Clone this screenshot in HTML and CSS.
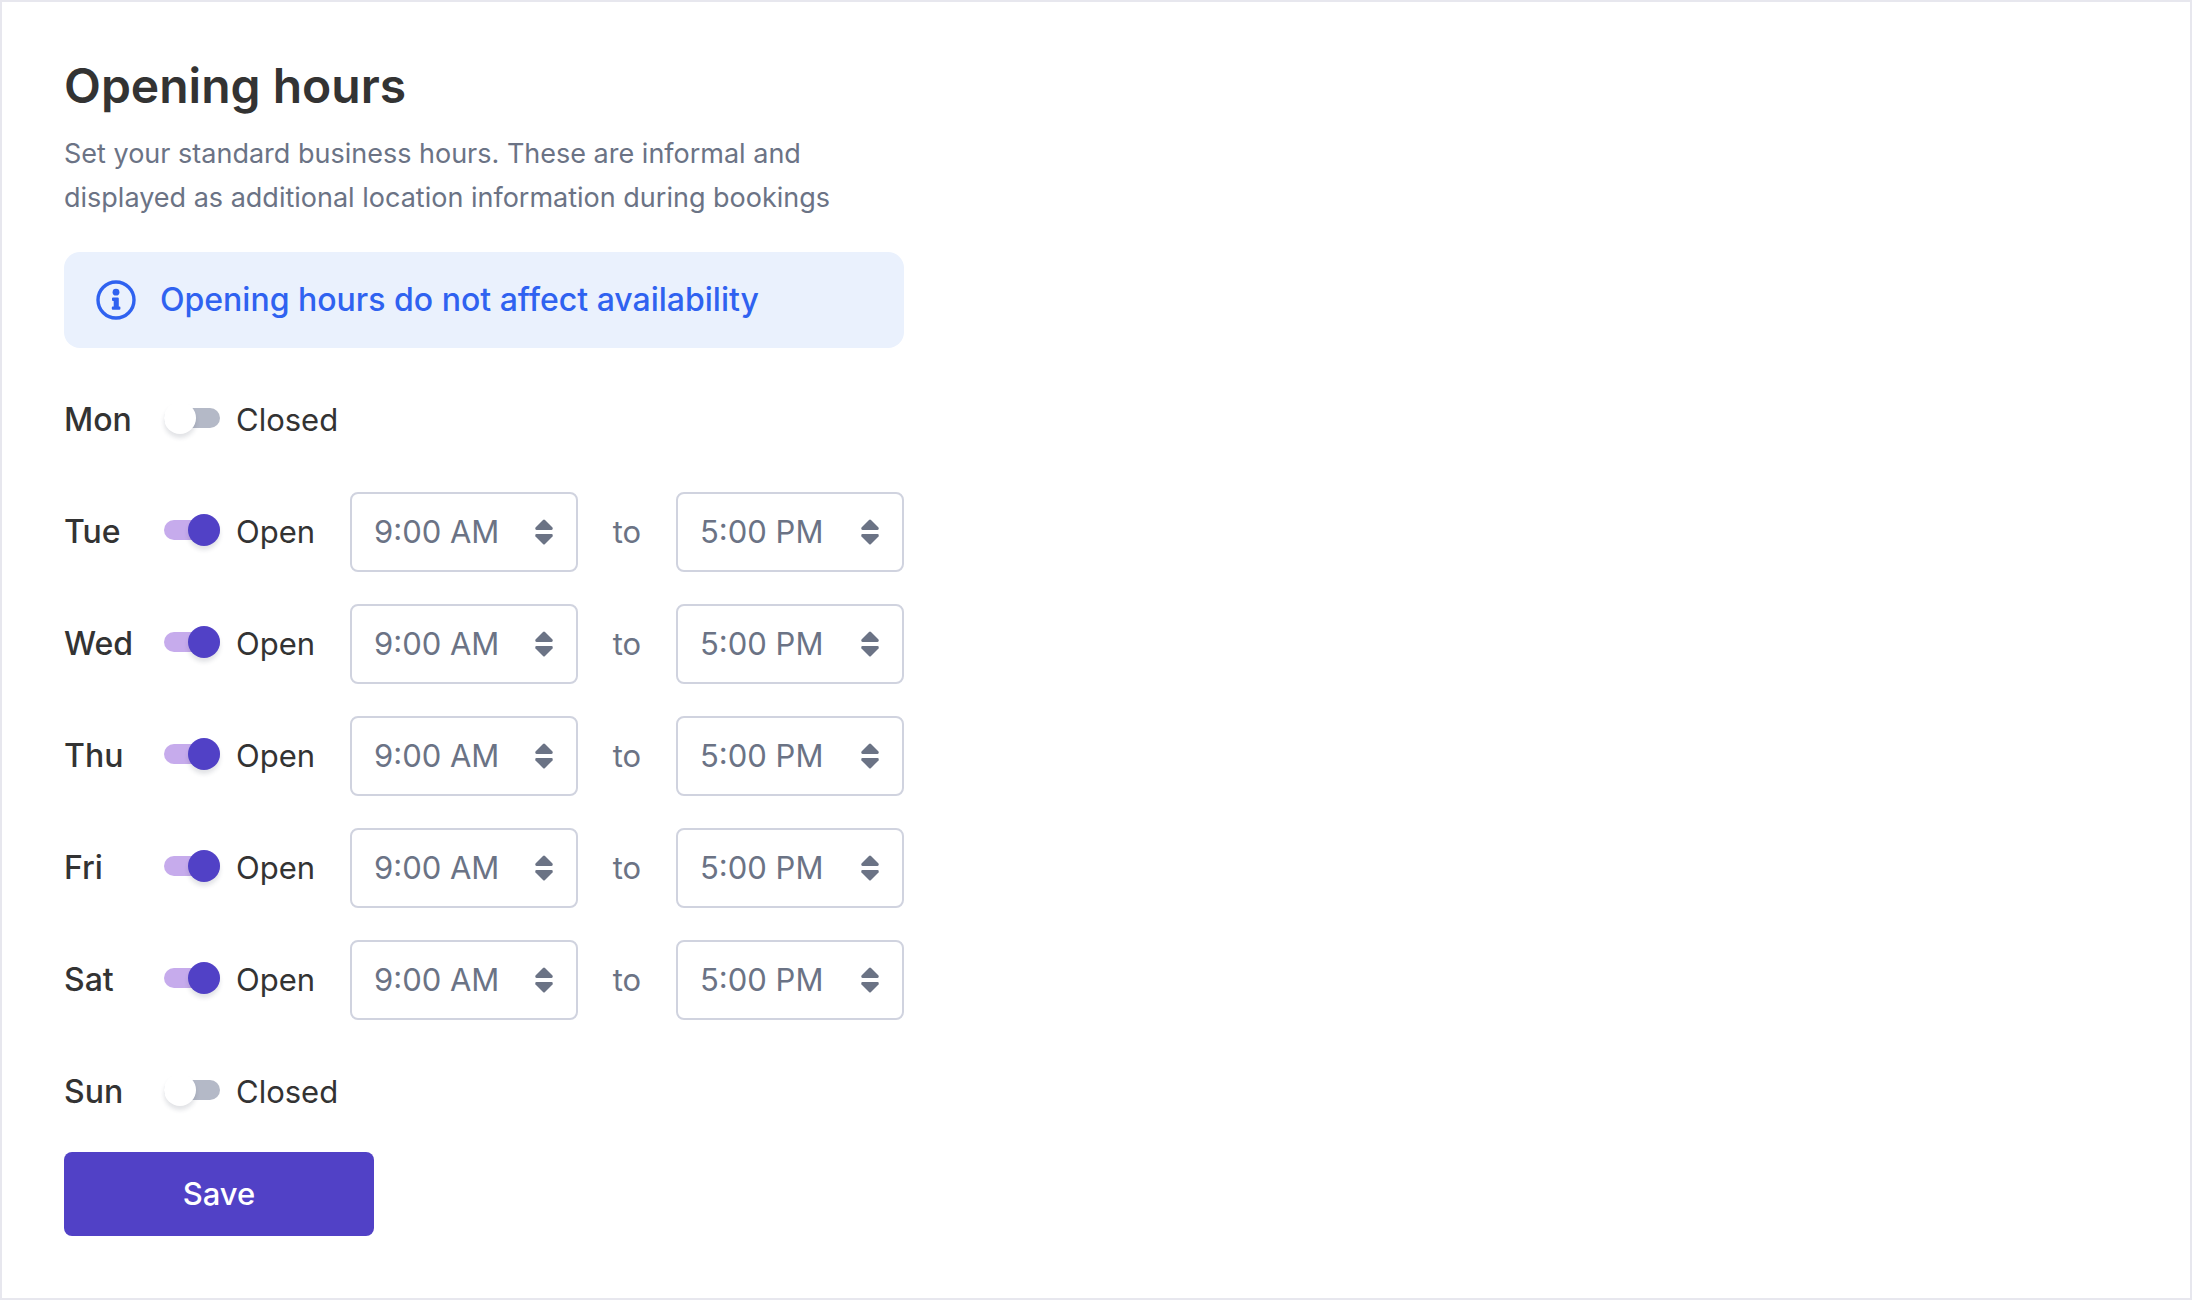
FILE: index.html
```html
<!DOCTYPE html>
<html lang="en">
<head>
    <meta charset="UTF-8" />
    <meta name="viewport" content="width=device-width, initial-scale=1.0" />
    <title>Opening hours</title>
    <link rel="stylesheet" href="styles.css">
</head>
<body>
    <svg class="sprite" aria-hidden="true">
        <symbol id="sort" viewBox="0 0 18 26">
            <path d="M8 1 Q9 0 10 1 L17.5 8.6 Q18.3 11 16.5 11 H1.5 Q-0.3 11 0.5 8.6 Z" />
            <path d="M8 25 Q9 26 10 25 L17.5 17.4 Q18.3 15 16.5 15 H1.5 Q-0.3 15 0.5 17.4 Z" />
        </symbol>
    </svg>

    <main class="panel">
        <form class="hours">
            <h1>Opening hours</h1>
            <p class="description">Set your standard business hours. These are informal and<br>displayed as additional location information during bookings</p>

            <div class="notice">
                <svg class="info" viewBox="0 0 40 40" aria-hidden="true">
                    <circle cx="20" cy="20" r="18" fill="none" stroke="currentColor" stroke-width="3.4" />
                    <circle cx="20" cy="12.2" r="3.4" />
                    <path d="M17 17.5 H21.7 Q22.8 17.5 22.8 18.6 V26.4 H23.4 Q24.4 26.4 24.4 27.4 V28.8 Q24.4 29.8 23.4 29.8 H16.8 Q15.8 29.8 15.8 28.8 V27.4 Q15.8 26.4 16.8 26.4 H17.7 V20.9 H17 Q16 20.9 16 19.9 V18.5 Q16 17.5 17 17.5 Z" />
                </svg>
                Opening hours do not affect availability
            </div>

            <div class="days">
                <div class="day">
                    <span class="name" id="mon">Mon</span>
                    <label class="status"><input type="checkbox" class="toggle" aria-describedby="mon">Closed</label>
                </div>
                <div class="day">
                    <span class="name" id="tue">Tue</span>
                    <label class="status"><input type="checkbox" class="toggle" aria-describedby="tue" checked>Open</label>
                    <div class="time">
                        <select aria-label="Tuesday opens"><option>9:00 AM</option></select>
                        <svg class="sort"><use href="#sort" /></svg>
                    </div>
                    <span class="to">to</span>
                    <div class="time">
                        <select aria-label="Tuesday closes"><option>5:00 PM</option></select>
                        <svg class="sort"><use href="#sort" /></svg>
                    </div>
                </div>
                <div class="day">
                    <span class="name" id="wed">Wed</span>
                    <label class="status"><input type="checkbox" class="toggle" aria-describedby="wed" checked>Open</label>
                    <div class="time">
                        <select aria-label="Wednesday opens"><option>9:00 AM</option></select>
                        <svg class="sort"><use href="#sort" /></svg>
                    </div>
                    <span class="to">to</span>
                    <div class="time">
                        <select aria-label="Wednesday closes"><option>5:00 PM</option></select>
                        <svg class="sort"><use href="#sort" /></svg>
                    </div>
                </div>
                <div class="day">
                    <span class="name" id="thu">Thu</span>
                    <label class="status"><input type="checkbox" class="toggle" aria-describedby="thu" checked>Open</label>
                    <div class="time">
                        <select aria-label="Thursday opens"><option>9:00 AM</option></select>
                        <svg class="sort"><use href="#sort" /></svg>
                    </div>
                    <span class="to">to</span>
                    <div class="time">
                        <select aria-label="Thursday closes"><option>5:00 PM</option></select>
                        <svg class="sort"><use href="#sort" /></svg>
                    </div>
                </div>
                <div class="day">
                    <span class="name" id="fri">Fri</span>
                    <label class="status"><input type="checkbox" class="toggle" aria-describedby="fri" checked>Open</label>
                    <div class="time">
                        <select aria-label="Friday opens"><option>9:00 AM</option></select>
                        <svg class="sort"><use href="#sort" /></svg>
                    </div>
                    <span class="to">to</span>
                    <div class="time">
                        <select aria-label="Friday closes"><option>5:00 PM</option></select>
                        <svg class="sort"><use href="#sort" /></svg>
                    </div>
                </div>
                <div class="day">
                    <span class="name" id="sat">Sat</span>
                    <label class="status"><input type="checkbox" class="toggle" aria-describedby="sat" checked>Open</label>
                    <div class="time">
                        <select aria-label="Saturday opens"><option>9:00 AM</option></select>
                        <svg class="sort"><use href="#sort" /></svg>
                    </div>
                    <span class="to">to</span>
                    <div class="time">
                        <select aria-label="Saturday closes"><option>5:00 PM</option></select>
                        <svg class="sort"><use href="#sort" /></svg>
                    </div>
                </div>
                <div class="day">
                    <span class="name" id="sun">Sun</span>
                    <label class="status"><input type="checkbox" class="toggle" aria-describedby="sun">Closed</label>
                </div>
            </div>

            <button type="button" class="save">Save</button>
        </form>
    </main>
</body>
</html>
```
FILE: styles.css
```css
* {
    box-sizing: border-box;
}

body {
    margin: 0;
    font-family: "Inter", "Liberation Sans", sans-serif;
    font-size: 31px;
    line-height: 40px;
    color: #333333;
    background-color: #ffffff;
}

.sprite {
    display: none;
}

.panel {
    min-height: 100vh;
    padding: 54px 62px 62px;
    border: 2px solid #e7e7ee;
}

.hours {
    max-width: 840px;
}

h1 {
    margin: 0;
    font-size: 48px;
    font-weight: 600;
    line-height: 60px;
}

.description {
    margin: 16px 0 32px;
    font-size: 27px;
    line-height: 44px;
    color: #6b7385;
    white-space: nowrap;
}

.notice {
    display: flex;
    align-items: center;
    gap: 24px;
    padding: 28px 32px;
    border-radius: 16px;
    background-color: #eaf1fd;
    color: #2f62f0;
    font-size: 32px;
    font-weight: 500;
}

.info {
    width: 40px;
    height: 40px;
    fill: currentColor;
}

.days {
    display: flex;
    flex-direction: column;
    gap: 32px;
    margin: 32px 0 20px;
}

.day {
    display: flex;
    align-items: center;
    height: 80px;
}

.name {
    width: 100px;
    font-size: 32px;
    font-weight: 500;
}

.status {
    display: flex;
    align-items: center;
    gap: 16px;
    width: 186px;
}

.toggle {
    appearance: none;
    position: relative;
    flex: none;
    width: 56px;
    height: 32px;
    margin: 0 0 4px;
}

.toggle::before {
    content: "";
    position: absolute;
    inset: 6px 0;
    border-radius: 10px;
    background-color: #b4b9c7;
}

.toggle::after {
    content: "";
    position: absolute;
    top: 0;
    left: 0;
    width: 32px;
    height: 32px;
    border-radius: 50%;
    background-color: #ffffff;
    box-shadow: 0 4px 4px rgba(51, 60, 80, 0.14);
}

.toggle:checked::before {
    background-color: #c6abec;
}

.toggle:checked::after {
    left: auto;
    right: 0;
    background-color: #5141c6;
}

.time {
    position: relative;
    flex: 1;
}

select {
    appearance: none;
    display: block;
    width: 100%;
    height: 80px;
    padding: 0 22px;
    border: 2px solid #d0d3df;
    border-radius: 8px;
    background-color: #ffffff;
    color: #6b7385;
    font: inherit;
}

.sort {
    position: absolute;
    top: 27px;
    right: 25px;
    width: 18px;
    height: 26px;
    fill: #6b7385;
    pointer-events: none;
}

.to {
    width: 98px;
    color: #6b7385;
    text-align: center;
}

.save {
    display: block;
    width: 310px;
    height: 84px;
    border: none;
    border-radius: 8px;
    background-color: #5141c6;
    color: #ffffff;
    font: inherit;
    font-weight: 500;
}
```
